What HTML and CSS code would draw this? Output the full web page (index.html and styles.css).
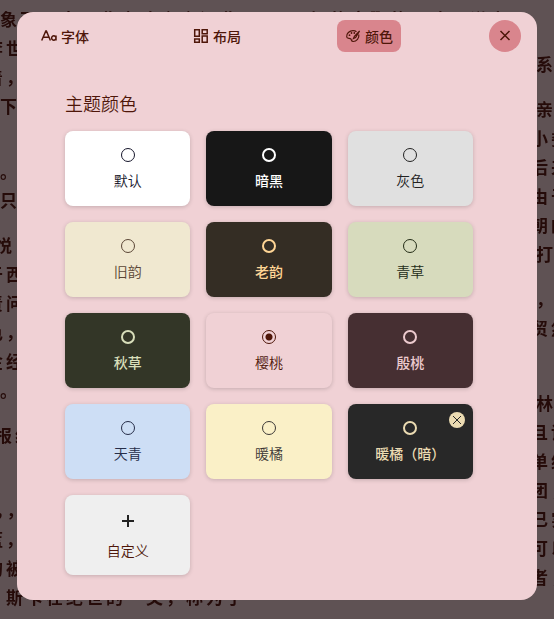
FILE: index.html
```html
<!DOCTYPE html>
<html lang="zh-CN">
<head>
<meta charset="utf-8">
<meta name="viewport" content="width=device-width, initial-scale=1">
<title>主题颜色</title>
<link rel="stylesheet" href="styles.css">
</head>
<body>
<div class="book" aria-hidden="true">
  <div class="spread-top"><p>象两面来，北京隆夜夜深北</p><p>恨的高鄂的观隆两说上</p></div>
  <div class="spread">
    <div class="page">
      <p class="shift">李世</p>
      <p class="shift">着，</p>
      <p>下</p>
      <p class="gap-large">。</p>
      <p>只</p>
      <p class="gap shift-half">悦</p>
      <p class="shift">于西</p>
      <p class="shift">责问</p>
      <p class="shift">色，</p>
      <p class="shift">金经</p>
      <p>。</p>
      <p class="gap shift-half">报纸</p>
      <p class="gap-wide shift-half">，，</p>
      <p class="shift">蓝，</p>
      <p class="shift">的被</p>
      <p class="indent">斯卡在绝世的一文，称为了</p>
    </div>
    <div class="page page-right">
      <p>系</p>
      <p class="gap">亲</p>
      <p class="shift-half">小娄</p>
      <p class="shift-half">后来</p>
      <p class="shift-half">由于</p>
      <p class="shift-half">朝的</p>
      <p>打</p>
      <p class="gap">，</p>
      <p class="shift-half">贸然</p>
      <p class="gap-wide">林</p>
      <p class="shift-half">且说</p>
      <p class="shift-half">单纯</p>
      <p class="shift-half">团，</p>
      <p class="shift-half">已实</p>
      <p class="shift-half">可以</p>
      <p class="shift-half">者，</p>
    </div>
  </div>
</div>
<div class="overlay">
  <main class="dialog" role="dialog" aria-label="阅读设置">
    <header class="toolbar">
      <button class="tab" type="button">
        <svg class="icon" viewBox="0 0 16 16" aria-hidden="true"><path d="M.7 12.500 4.800 3h.6l4 9.500M2.300 9.200h5.500M15 7.500v5M15 10a2.200 2.200 0 1 0-4.400 0a2.200 2.200 0 1 0 4.400 0"/></svg>
        <span>字体</span>
      </button>
      <button class="tab" type="button">
        <svg class="icon" viewBox="0 0 16 16" aria-hidden="true"><path d="M1.700 1.700h4.600v6.600H1.700zM9.200 1.700h5v4h-5zM9.200 8h5v6.300h-5zM1.700 11h4.600v3.300H1.700z"/></svg>
        <span>布局</span>
      </button>
      <button class="tab active" type="button">
        <svg class="icon palette" viewBox="0 0 16 16" aria-hidden="true"><path d="M13.800 6.500C14.500 10 11.500 13.500 8.200 13.500c-2.200 0-1.500-2-2.600-2.800-1.200-.8-3.600.2-3.900-1.700C1.200 5.500 4.500 2.700 8 2.700c1.500 0 2.700.4 3.500 1M14.600 3 9.400 8.300l-1 2.300 2.200-1z"/><circle class="dot" cx="4.500" cy="7.200" r=".9"/><circle class="dot" cx="6.500" cy="5" r=".9"/><circle class="dot" cx="9.300" cy="5" r=".9"/></svg>
        <span>颜色</span>
      </button>
      <button class="close" type="button" aria-label="关闭"><svg class="icon" viewBox="0 0 16 16" aria-hidden="true"><path d="m3.500 3 9 9m0-9-9 9"/></svg></button>
    </header>
    <section class="content">
      <h1 class="title">主题颜色</h1>
      <div class="themes">
        <label class="card default"><input type="radio" name="theme"><span>默认</span></label>
        <label class="card black"><input type="radio" name="theme"><span>暗黑</span></label>
        <label class="card gray"><input type="radio" name="theme"><span>灰色</span></label>
        <label class="card sepia"><input type="radio" name="theme"><span>旧韵</span></label>
        <label class="card sepia-dark"><input type="radio" name="theme"><span>老韵</span></label>
        <label class="card grass"><input type="radio" name="theme"><span>青草</span></label>
        <label class="card grass-dark"><input type="radio" name="theme"><span>秋草</span></label>
        <label class="card cherry"><input type="radio" name="theme" checked><span>樱桃</span></label>
        <label class="card cherry-dark"><input type="radio" name="theme"><span>殷桃</span></label>
        <label class="card sky"><input type="radio" name="theme"><span>天青</span></label>
        <label class="card orange"><input type="radio" name="theme"><span>暖橘</span></label>
        <div class="removable">
          <label class="card orange-dark"><input type="radio" name="theme"><span>暖橘（暗）</span></label>
          <button class="remove" type="button" aria-label="删除"><svg viewBox="0 0 16 16" aria-hidden="true"><path d="m4 4 8 8m0-8-8 8"/></svg></button>
        </div>
        <button class="card custom" type="button"><svg class="plus" viewBox="0 0 24 24" aria-hidden="true"><path d="M12 6v12M6 12h12"/></svg><span>自定义</span></button>
      </div>
    </section>
  </main>
</div>
</body>
</html>
```
FILE: styles.css
```css
* {
  box-sizing: border-box;
}

body {
  margin: 0;
  min-height: 100vh;
  overflow: hidden;
  background: #5f5254;
  color: #4e1609;
  font-family: "Noto Sans CJK SC", sans-serif;
}

button {
  border: 0;
  padding: 0;
  color: inherit;
  font: inherit;
  cursor: pointer;
}

/* Book pages behind the dialog */
.book {
  position: fixed;
  inset: 0;
  overflow: hidden;
  color: #250b09;
  font-size: 17px;
  font-weight: 700;
  line-height: 29px;
  letter-spacing: 3px;
  white-space: nowrap;
}

.book p {
  margin: 0;
}

.spread-top,
.spread {
  display: flex;
  justify-content: space-between;
}

.spread-top {
  padding: 4px 44px 0 0;
}

.page {
  width: 24px;
}

.page-right {
  width: 18px;
  padding-top: 16px;
}

.book .gap {
  margin-top: 16px;
}

.book .gap-wide {
  margin-top: 46px;
}

.book .gap-large {
  margin-top: 36px;
}

.book .shift {
  margin-left: -14px;
}

.book .shift-half {
  margin-left: -5px;
}

.book .indent {
  margin-left: 6px;
}

/* Settings dialog */
.overlay {
  position: relative;
  padding: 12px 17px 19px;
}

.dialog {
  border-radius: 16px;
  background: #f0d1d5;
}

.toolbar {
  display: flex;
  justify-content: space-between;
  padding: 8px 16px;
}

.tab {
  display: flex;
  align-items: center;
  gap: 4px;
  height: 32px;
  padding: 0 8px;
  border-radius: 8px;
  background: transparent;
  font-size: 14px;
  font-weight: 500;
  line-height: 20px;
}

.tab.active,
.close {
  background: #d9858d;
}

.close {
  display: grid;
  place-items: center;
  width: 32px;
  height: 32px;
  border-radius: 50%;
}

.icon {
  width: 16px;
  height: 16px;
  fill: none;
  stroke: currentColor;
  stroke-width: 1.5;
}

.icon.palette {
  stroke-width: 1.2;
}

.icon .dot {
  fill: currentColor;
  stroke: none;
}

.content {
  padding: 31px 64px 25px 48px;
}

.title {
  margin: 0 0 16px;
  font-size: 18px;
  font-weight: 350;
  line-height: 24px;
}

.themes {
  display: grid;
  grid-template-columns: repeat(3, 1fr);
  gap: 16px;
}

.card {
  display: flex;
  flex-direction: column;
  align-items: center;
  gap: 8px;
  width: 100%;
  padding: 17px 8px 16px;
  border-radius: 8px;
  box-shadow: 0 1px 4px rgb(0 0 0 / 18%);
  font-size: 14px;
  line-height: 20px;
  font-weight: 350;
  cursor: pointer;
}

.card input {
  appearance: none;
  width: 14px;
  height: 14px;
  margin: 0;
  border: 1px solid currentColor;
  border-radius: 50%;
  color: inherit;
}

.card input:checked {
  background: radial-gradient(circle, currentColor 3px, transparent 4px);
}

.default { background: #fff; color: #16162b; }
.black { background: #171717; color: #fff; }
.gray { background: #e0e0e0; color: #222; }
.sepia { background: #f0e8d0; color: #5b4636; }
.sepia-dark { background: #342d24; color: #ffd595; }
.grass { background: #d7dbbd; color: #232c16; }
.grass-dark { background: #333627; color: #d8deba; }
.cherry { background: #f0d1d5; color: #4e1609; }
.cherry-dark { background: #462f32; color: #eccace; }
.sky { background: #cddef5; color: #262d48; }
.orange { background: #faf0c7; color: #3c3836; }
.orange-dark { background: #282828; color: #ebdbb2; }

.black,
.sepia-dark,
.grass-dark,
.cherry-dark,
.orange-dark {
  font-weight: 500;
}

.black input,
.sepia-dark input,
.grass-dark input,
.cherry-dark input,
.orange-dark input {
  border-width: 2px;
}

.removable {
  position: relative;
}

.remove {
  position: absolute;
  top: 8px;
  right: 8px;
  width: 16px;
  height: 16px;
  border-radius: 50%;
  background: #ebdbb2;
  color: #282828;
}

.remove svg {
  display: block;
  fill: none;
  stroke: currentColor;
}

.custom {
  gap: 7px;
  padding: 14px 8px 15px;
  background: #efefef;
}

.plus {
  width: 24px;
  height: 24px;
  fill: none;
  stroke: #222;
  stroke-width: 2;
}
```
